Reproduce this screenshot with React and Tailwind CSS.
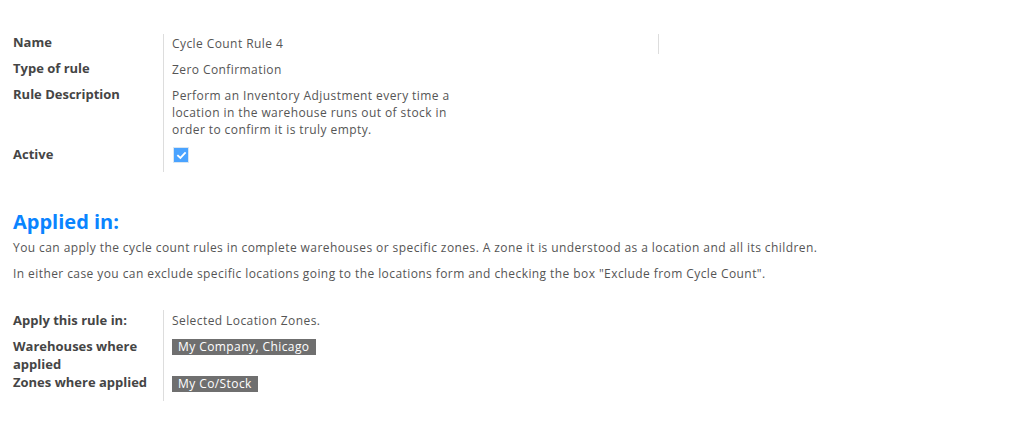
export default function App() {
  const font = { fontFamily: '"Open Sans", "Noto Sans", Arial, sans-serif' };
  return (
    <div className="w-[1016px] h-[425px] bg-white text-[12px] tracking-[0.42px] text-[#555555]" style={font}>
      <div className="pt-[34px] pl-[13px]">
        {/* Top table */}
        <div className="flex">
          <div className="w-[150px] flex flex-col font-bold text-[#454545] text-[13px] tracking-normal">
            <div className="h-[26px] leading-[17px]">Name</div>
            <div className="h-[26px] leading-[17px]">Type of rule</div>
            <div className="h-[60px] leading-[17px]">Rule Description</div>
            <div className="h-[26px] leading-[17px]">Active</div>
          </div>
          <div className="border-l border-[#dddddd] pl-[8px] w-[495px] flex flex-col">
            <div className="h-[26px] leading-[17px] pt-[1px]">Cycle Count Rule 4</div>
            <div className="h-[26px] leading-[17px] pt-[1px]">Zero Confirmation</div>
            <div className="h-[60px] leading-[17px] pt-[1px] w-[282px]">
              Perform an Inventory Adjustment every time a location in the warehouse runs out of stock in order to confirm it is truly empty.
            </div>
            <div className="h-[26px] pt-[1px]">
              <div className="ml-[1px] w-[16px] h-[16px] bg-[#4aa3ff] border border-[#d9e6f2] flex items-center justify-center">
                <svg width="11" height="11" viewBox="0 0 12 12">
                  <path d="M2.2 6.2 L4.8 8.6 L9.8 3.4" fill="none" stroke="white" strokeWidth="2" strokeLinecap="square" />
                </svg>
              </div>
            </div>
          </div>
          <div className="border-l border-[#dddddd] h-[20px]" />
        </div>

        {/* Applied in */}
        <h2 className="mt-[38px] text-[20px] leading-[24px] font-bold tracking-normal text-[#0a84ff]">Applied in:</h2>
        <p className="mt-[5px] leading-[17px]">You can apply the cycle count rules in complete warehouses or specific zones. A zone it is understood as a location and all its children.</p>
        <p className="mt-[9px] leading-[17px]">In either case you can exclude specific locations going to the locations form and checking the box "Exclude from Cycle Count".</p>

        {/* Bottom table */}
        <div className="flex mt-[28px]">
          <div className="w-[150px] flex flex-col font-bold text-[#454545] text-[13px] tracking-normal leading-[18px] pt-[1px]">
            <div className="h-[26px]">Apply this rule in:</div>
            <div>Warehouses where<br />applied</div>
            <div>Zones where applied</div>
          </div>
          <div className="border-l border-[#dddddd] pl-[8px] flex flex-col items-start h-[91px]">
            <div className="h-[26px] leading-[17px] pt-[2px]">Selected Location Zones.</div>
            <div className="bg-[#6f6f6f] text-white px-[6px] leading-[16px] h-[16px] mt-[3px]">My Company, Chicago</div>
            <div className="bg-[#6f6f6f] text-white px-[6px] leading-[16px] h-[16px] mt-[21px]">My Co/Stock</div>
          </div>
        </div>
      </div>
    </div>
  );
}
